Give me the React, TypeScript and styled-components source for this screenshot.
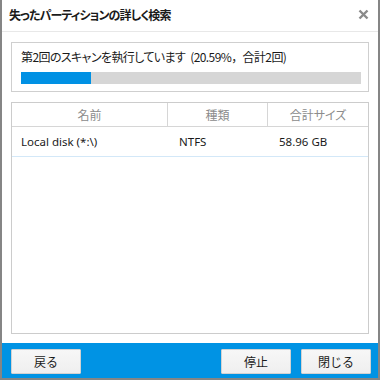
import React from 'react';
import styled, { createGlobalStyle } from 'styled-components';

const GlobalStyle = createGlobalStyle`
  html, body {
    margin: 0;
    padding: 0;
    background: #ffffff;
  }
  * {
    box-sizing: border-box;
  }
`;

const jpFont = `"Noto Sans CJK JP", "Noto Sans", sans-serif`;
const latinFont = `"Noto Sans", "Noto Sans CJK JP", sans-serif`;

const Window = styled.div`
  width: 380px;
  height: 380px;
  display: flex;
  flex-direction: column;
  background: #ffffff;
  border: 2px solid #858585;
  border-top: none;
  font-family: ${jpFont};
  color: #1a1a1a;
`;

const TitleBar = styled.div`
  height: 32px;
  flex: none;
  display: flex;
  align-items: center;
  justify-content: space-between;
  padding: 0 9px 2px 7px;
  border-bottom: 1px solid #e8e8e8;
`;

const Title = styled.div`
  font-size: 12px;
  font-weight: 700;
  font-feature-settings: "palt";
  letter-spacing: -0.9px;
`;

const CloseButton = styled.div`
  width: 12px;
  height: 12px;
  display: flex;
  align-items: center;
  justify-content: center;
`;

const Body = styled.div`
  flex: 1;
  display: flex;
  flex-direction: column;
  gap: 10px;
  padding: 10px 9px 9px;
`;

const ProgressBox = styled.div`
  height: 50px;
  border: 1px solid #cfcfcf;
  padding: 6px 9px 0;
`;

const StatusText = styled.div`
  font-size: 12px;
  line-height: 16px;
  font-feature-settings: "palt";
  letter-spacing: -0.6px;
  white-space: nowrap;
`;

const Numbers = styled.span`
  letter-spacing: -0.6px;
  margin-left: 5px;
  font-feature-settings: normal;
`;

const Track = styled.div`
  margin-top: 7px;
  width: 340px;
  height: 12px;
  background: #d6d6d6;
`;

const Fill = styled.div`
  height: 100%;
  background: #0091e4;
`;

const Table = styled.div`
  flex: 1;
  border: 1px solid #cccccc;
  display: flex;
  flex-direction: column;
`;

const Row = styled.div<{ $header?: boolean }>`
  display: grid;
  grid-template-columns: 156px 100px 1fr;
  height: ${(p) => (p.$header ? '24px' : '30px')};
  border-bottom: 1px solid ${(p) => (p.$header ? '#d6d6d6' : '#d3e8f8')};
`;

const HeadCell = styled.div<{ $last?: boolean }>`
  display: flex;
  align-items: center;
  justify-content: center;
  font-size: 12px;
  color: #8c8c8c;
  font-feature-settings: "palt";
  border-right: ${(p) => (p.$last ? 'none' : '1px solid #d6d6d6')};
`;

const Cell = styled.div<{ $pad: number }>`
  display: flex;
  align-items: center;
  padding-left: ${(p) => p.$pad}px;
  padding-bottom: 1px;
  font-family: ${latinFont};
  font-size: 11.5px;
  white-space: nowrap;
`;

const Footer = styled.div`
  height: 35px;
  flex: none;
  background: #0093e4;
  display: flex;
  align-items: flex-start;
  padding: 6px 7px 0 9px;
`;

const Button = styled.button`
  width: 70px;
  height: 25px;
  padding: 0;
  border: 1px solid #d2d2d2;
  border-radius: 1px;
  background: linear-gradient(#f7f7f7, #efefef);
  font-family: ${jpFont};
  font-size: 12px;
  color: #1a1a1a;
`;

const Spacer = styled.div`
  flex: 1;
`;

const ButtonGroup = styled.div`
  display: flex;
  gap: 10px;
`;

const progress = 20.59;

export default function App() {
  return (
    <>
      <GlobalStyle />
      <Window>
        <TitleBar>
          <Title>失ったパーティションの詳しく検索</Title>
          <CloseButton>
            <svg width="11" height="11" viewBox="0 0 11 11">
              <path d="M1.5 1.5 L9.5 9.5 M9.5 1.5 L1.5 9.5" stroke="#8a8a8a" strokeWidth="2.4" />
            </svg>
          </CloseButton>
        </TitleBar>
        <Body>
          <ProgressBox>
            <StatusText>
              第2回のスキャンを執行しています<Numbers>(20.59%，合計2回)</Numbers>
            </StatusText>
            <Track>
              <Fill style={{ width: `${progress}%` }} />
            </Track>
          </ProgressBox>
          <Table>
            <Row $header>
              <HeadCell>名前</HeadCell>
              <HeadCell>種類</HeadCell>
              <HeadCell $last>合計サイズ</HeadCell>
            </Row>
            <Row>
              <Cell $pad={9}>Local disk (*:\)</Cell>
              <Cell $pad={11}>NTFS</Cell>
              <Cell $pad={11}>58.96 GB</Cell>
            </Row>
          </Table>
        </Body>
        <Footer>
          <Button>戻る</Button>
          <Spacer />
          <ButtonGroup>
            <Button>停止</Button>
            <Button>閉じる</Button>
          </ButtonGroup>
        </Footer>
      </Window>
    </>
  );
}
